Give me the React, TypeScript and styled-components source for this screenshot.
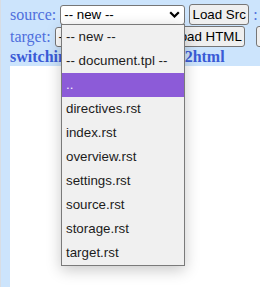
import React from 'react';
import styled, { createGlobalStyle } from 'styled-components';

const GlobalStyle = createGlobalStyle`
  html, body {
    margin: 0;
    padding: 0;
    overflow: hidden;
    background: #ffffff;
  }
`;

const Page = styled.div`
  position: relative;
  width: 260px;
  height: 287px;
  overflow: hidden;
  background: #cce4fc;
  border-left: 1px solid #d8dde4;
  box-sizing: border-box;
  padding-left: 9px;
  display: flex;
  flex-direction: column;
`;

const Header = styled.div`
  margin-top: -20px;
  display: flex;
  flex-direction: column;
  gap: 3px;
`;

const Row = styled.div`
  display: flex;
  align-items: center;
  gap: 4px;
  height: 19px;
  white-space: nowrap;
`;

const TopRow = styled(Row)`
  gap: 8px;
  margin-bottom: 3px;
`;

const Label = styled.span`
  font-family: "Liberation Serif", serif;
  font-size: 16px;
  color: #4f6fdc;
  line-height: 19px;
`;

const Input = styled.div<{ $w: number }>`
  width: ${p => p.$w}px;
  height: 19px;
  box-sizing: border-box;
  background: #fff;
  border: 1px solid #767676;
  border-radius: 2px;
  flex-shrink: 0;
`;

const Select = styled.div<{ $w: number }>`
  width: ${p => p.$w}px;
  height: 20px;
  box-sizing: border-box;
  background: #fff;
  border: 1px solid #767676;
  border-radius: 3px;
  display: flex;
  align-items: center;
  justify-content: space-between;
  padding: 0 4px 0 3px;
  font-family: "Liberation Sans", Arial, sans-serif;
  font-size: 13.33px;
  color: #000;
  flex-shrink: 0;
`;

const Button = styled.div<{ $w: number }>`
  width: ${p => p.$w}px;
  height: 21px;
  box-sizing: border-box;
  background: #efefef;
  border: 1px solid #767676;
  border-radius: 3px;
  display: flex;
  align-items: center;
  justify-content: center;
  font-family: "Liberation Sans", Arial, sans-serif;
  font-size: 13.33px;
  color: #000;
  flex-shrink: 0;
`;

const SideButton = styled(Button)`
  margin-left: 7px;
`;

const Colon = styled.span`
  font-family: "Liberation Serif", serif;
  font-size: 16px;
  color: #4f6fdc;
`;

const Title = styled.div`
  font-family: "Liberation Serif", serif;
  font-weight: bold;
  font-size: 16px;
  color: #3a5bd6;
  line-height: 19px;
  height: 19px;
  margin-top: -2px;
  white-space: nowrap;
`;

const Panel = styled.div`
  flex: 1;
  background: #ffffff;
`;

const Dropdown = styled.ul`
  position: absolute;
  left: 60px;
  top: 24px;
  width: 124px;
  margin: 0;
  padding: 0;
  list-style: none;
  box-sizing: border-box;
  background: #f0f0f0;
  border: 1px solid #7a7a7a;
  box-shadow: 0 4px 14px rgba(0, 0, 0, 0.22);
`;

const Option = styled.li<{ $active?: boolean }>`
  height: 24px;
  line-height: 24px;
  padding-left: 4px;
  font-family: "Liberation Sans", Arial, sans-serif;
  font-size: 13.33px;
  color: ${p => (p.$active ? '#f4f0fb' : '#1c1c1c')};
  background: ${p => (p.$active ? '#8c5bd8' : 'transparent')};
  white-space: nowrap;
`;

const Chevron = () => (
  <svg width="11" height="7" viewBox="0 0 11 7">
    <path d="M1.2 1.2 L5.5 5.5 L9.8 1.2" fill="none" stroke="#000" strokeWidth="2.2" />
  </svg>
);

const options = [
  '-- new --',
  '-- document.tpl --',
  '..',
  'directives.rst',
  'index.rst',
  'overview.rst',
  'settings.rst',
  'source.rst',
  'storage.rst',
  'target.rst',
];

export default function App() {
  return (
    <>
      <GlobalStyle />
      <Page>
        <Header>
          <TopRow>
            <Label>mirror path, log:</Label>
            <Input $w={127} />
          </TopRow>
          <Row>
            <Label>source:</Label>
            <Select $w={125}>
              <span>-- new --</span>
              <Chevron />
            </Select>
            <Button $w={60}>Load Src</Button>
            <Colon>:</Colon>
          </Row>
          <Row>
            <Label>target:</Label>
            <Select $w={111}>
              <span>-- new --</span>
              <Chevron />
            </Select>
            <Button $w={75}>Load HTML</Button>
            <SideButton $w={60}>Save</SideButton>
          </Row>
          <Title>switching to targets: html2html</Title>
        </Header>
        <Panel />
        <Dropdown>
          {options.map(o => (
            <Option key={o} $active={o === '..'}>{o}</Option>
          ))}
        </Dropdown>
      </Page>
    </>
  );
}
